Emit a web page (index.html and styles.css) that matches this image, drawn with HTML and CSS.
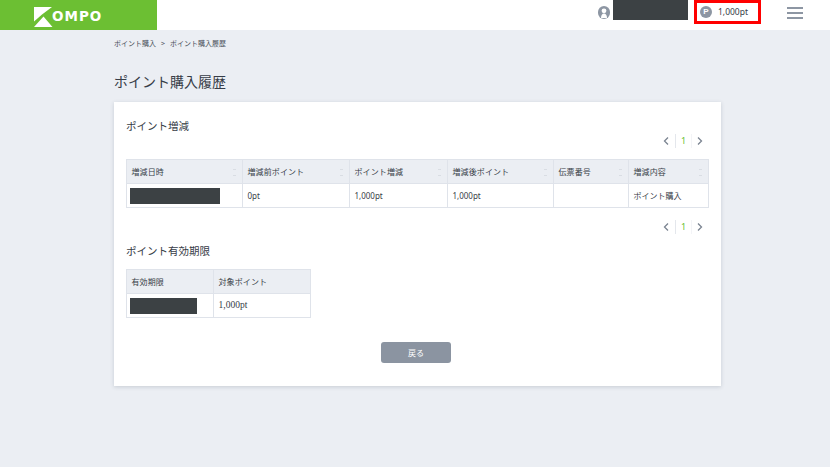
FILE: index.html
```html
<!DOCTYPE html>
<html lang="ja">
<head>
<meta charset="utf-8">
<title>ポイント購入履歴</title>
<link rel="stylesheet" href="styles.css">
</head>
<body>
<header class="topbar">
  <div class="logo">
    <svg class="logo-mark" width="19" height="20" viewBox="0 0 19 20"><path d="M0 0H18L8 7.500 0 14.500Z M0 20 9.500 9.500 18.500 20Z" fill="#fff"/></svg>
    <span class="logo-text">OMPO</span>
  </div>
  <div class="top-right">
    <svg class="user-icon" width="12" height="13" viewBox="0 0 12 13"><rect width="12" height="13" rx="6" fill="#8d96a3"/><circle cx="6" cy="4.800" r="2.400" fill="#fff"/><path d="M3 12c0-3 1.300-4.500 3-4.500S9 9 9 12z" fill="#fff"/></svg>
    <div class="mask user-mask"></div>
    <div class="points-box">
      <span class="p-icon">P</span>
      <span class="points-value">1,000pt</span>
    </div>
    <div class="burger"><i></i><i></i><i></i></div>
  </div>
</header>

<nav class="crumbs"><span>ポイント購入</span><span class="sep">&gt;</span><span>ポイント購入履歴</span></nav>
<h1 class="page-title">ポイント購入履歴</h1>

<main class="card">
  <h2 class="sec-title">ポイント増減</h2>
  <div class="pager pager-top">
    <svg class="chev" width="7" height="10" viewBox="0 0 7 10"><path d="M5 1.500 1.500 5 5 8.500" fill="none" stroke="#7b8491" stroke-width="1.300"/></svg>
    <span class="page-num">1</span>
    <svg class="chev" width="7" height="10" viewBox="0 0 7 10"><path d="M2 1.500 5.500 5 2 8.500" fill="none" stroke="#7b8491" stroke-width="1.300"/></svg>
  </div>
  <table class="grid grid-main">
    <colgroup><col class="c1"><col class="c2"><col class="c3"><col class="c4"><col class="c5"><col class="c6"></colgroup>
    <thead><tr>
      <th>増減日時<span class="sort"></span></th>
      <th>増減前ポイント<span class="sort"></span></th>
      <th>ポイント増減<span class="sort"></span></th>
      <th>増減後ポイント<span class="sort"></span></th>
      <th>伝票番号<span class="sort"></span></th>
      <th>増減内容<span class="sort"></span></th>
    </tr></thead>
    <tbody><tr>
      <td class="mask-cell"><div class="mask date-mask"></div></td>
      <td>0pt</td>
      <td>1,000pt</td>
      <td>1,000pt</td>
      <td></td>
      <td>ポイント購入</td>
    </tr></tbody>
  </table>
  <div class="pager pager-bottom">
    <svg class="chev" width="7" height="10" viewBox="0 0 7 10"><path d="M5 1.500 1.500 5 5 8.500" fill="none" stroke="#7b8491" stroke-width="1.300"/></svg>
    <span class="page-num">1</span>
    <svg class="chev" width="7" height="10" viewBox="0 0 7 10"><path d="M2 1.500 5.500 5 2 8.500" fill="none" stroke="#7b8491" stroke-width="1.300"/></svg>
  </div>

  <h2 class="sec-title sec-two">ポイント有効期限</h2>
  <table class="grid grid-small">
    <colgroup><col class="s1"><col class="s2"></colgroup>
    <thead><tr><th>有効期限</th><th>対象ポイント</th></tr></thead>
    <tbody><tr>
      <td class="mask-cell"><div class="mask exp-mask"></div></td>
      <td class="serif">1,000pt</td>
    </tr></tbody>
  </table>
  <div class="actions"><button class="back" type="button">戻る</button></div>
</main>
</body>
</html>
```
FILE: styles.css
```css
* { box-sizing: border-box; }
html, body { margin: 0; padding: 0; }
body {
  background: #ebeef3;
  color: #373d47;
  font-family: "Noto Sans CJK JP", "Noto Sans", sans-serif;
  height: 467px;
  overflow: hidden;
}
.topbar {
  height: 30px;
  background: #fff;
  display: flex;
  justify-content: space-between;
}
.logo {
  width: 157px;
  background: #6cbf33;
  display: flex;
  align-items: center;
  padding: 0 0 0 34px;
}
.logo-mark { flex: none; margin-top: 3px; }
.logo-text {
  color: #fff;
  font: 700 13.500px/1 "DejaVu Sans", sans-serif;
  letter-spacing: 1px;
  margin-left: -1px;
  margin-top: 4px;
}
.top-right { display: flex; align-items: flex-start; }
.user-icon { margin: 6px 3px 0 0; }
.mask { background: #3c4144; }
.user-mask { width: 75px; height: 20px; }
.points-box {
  width: 67px;
  height: 24px;
  margin-left: 6px;
  border: 3px solid #f00;
  display: flex;
  align-items: center;
  padding-left: 3px;
}
.p-icon {
  width: 12px;
  height: 12px;
  border-radius: 50%;
  background: #8d96a3;
  color: #fff;
  font: 700 8px/12px "Liberation Sans", sans-serif;
  text-align: center;
}
.points-value {
  font: 8.500px/1 "Noto Sans", sans-serif;
  margin-left: 6px;
}
.burger {
  width: 16px;
  margin: 7px 27px 0 26px;
  display: flex;
  flex-direction: column;
  gap: 3px;
}
.burger i { display: block; height: 2px; background: #8d96a3; }
.crumbs {
  margin: 8px 0 0 114px;
  font-size: 7px;
  line-height: 10px;
  color: #4a505a;
  display: flex;
  gap: 5px;
}
.page-title {
  margin: 23px 0 0 114px;
  font-size: 14px;
  line-height: 20px;
  font-weight: 400;
}
.card {
  margin: 11px 0 0 114px;
  width: 607px;
  height: 284px;
  background: #fff;
  box-shadow: 0 1px 4px rgba(60, 70, 90, .2);
  padding: 17px 12px 0;
  position: relative;
}
.sec-title {
  margin: 0;
  font-size: 10.500px;
  line-height: 14px;
  font-weight: 400;
}
.pager {
  display: flex;
  justify-content: flex-end;
  align-items: center;
  height: 14px;
}
.pager-top { margin-top: 1px; }
.pager-bottom { margin-top: 12px; }
.page-num {
  width: 17px;
  margin: 0 4px 0 2px;
  height: 14px;
  border-left: 1px solid #e4e7ec;
  border-right: 1px solid #f3f4f7;
  color: #6cbf33;
  font: 9px/14px "Noto Sans", sans-serif;
  text-align: center;
}
.chev { flex: none; margin-right: 3px; }
.chev:last-child { margin-right: 6px; }
.grid {
  border-collapse: collapse;
  table-layout: fixed;
  font-size: 8px;
}
.grid-main { width: 582px; margin-top: 11px; }
.grid-small { width: 184px; margin-top: 11px; }
.c1 { width: 116px; } .c2 { width: 107px; } .c3 { width: 98px; }
.c4 { width: 106px; } .c5 { width: 75px; } .c6 { width: 80px; }
.s1 { width: 87px; } .s2 { width: 97px; }
.grid th, .grid td {
  border: 1px solid #dfe3ea;
  padding: 0 0 1px 4.500px;
  text-align: left;
  font-weight: 400;
}
.grid th {
  height: 24px;
  background: #ebeef3;
  position: relative;
  letter-spacing: .1px;
}
.grid td {
  height: 24px;
  font-family: "Noto Sans", "Noto Sans CJK JP", sans-serif;
  font-size: 8px;
}
.grid td.serif { font-family: "Liberation Serif", serif; font-size: 9.500px; }
.grid td.mask-cell { padding: 0 0 0 3px; }
.date-mask { width: 90px; height: 16px; }
.exp-mask { width: 67px; height: 16px; }
.sort {
  position: absolute;
  right: 6px;
  top: 9px;
  width: 4px;
  height: 7px;
  background:
    linear-gradient(#d9dde3, #d9dde3) center top / 3px 1px no-repeat,
    linear-gradient(#d9dde3, #d9dde3) center bottom / 3px 1px no-repeat;
}
.sec-two { margin-top: 10px; }
.actions { display: flex; justify-content: center; margin-top: 24px; padding-right: 3px; }
.back {
  width: 70px;
  height: 21px;
  border: 0;
  border-radius: 3px;
  background: #8b94a1;
  color: #fff;
  font: 8px/21px "Noto Sans CJK JP", sans-serif;
  padding: 0;
}
```
